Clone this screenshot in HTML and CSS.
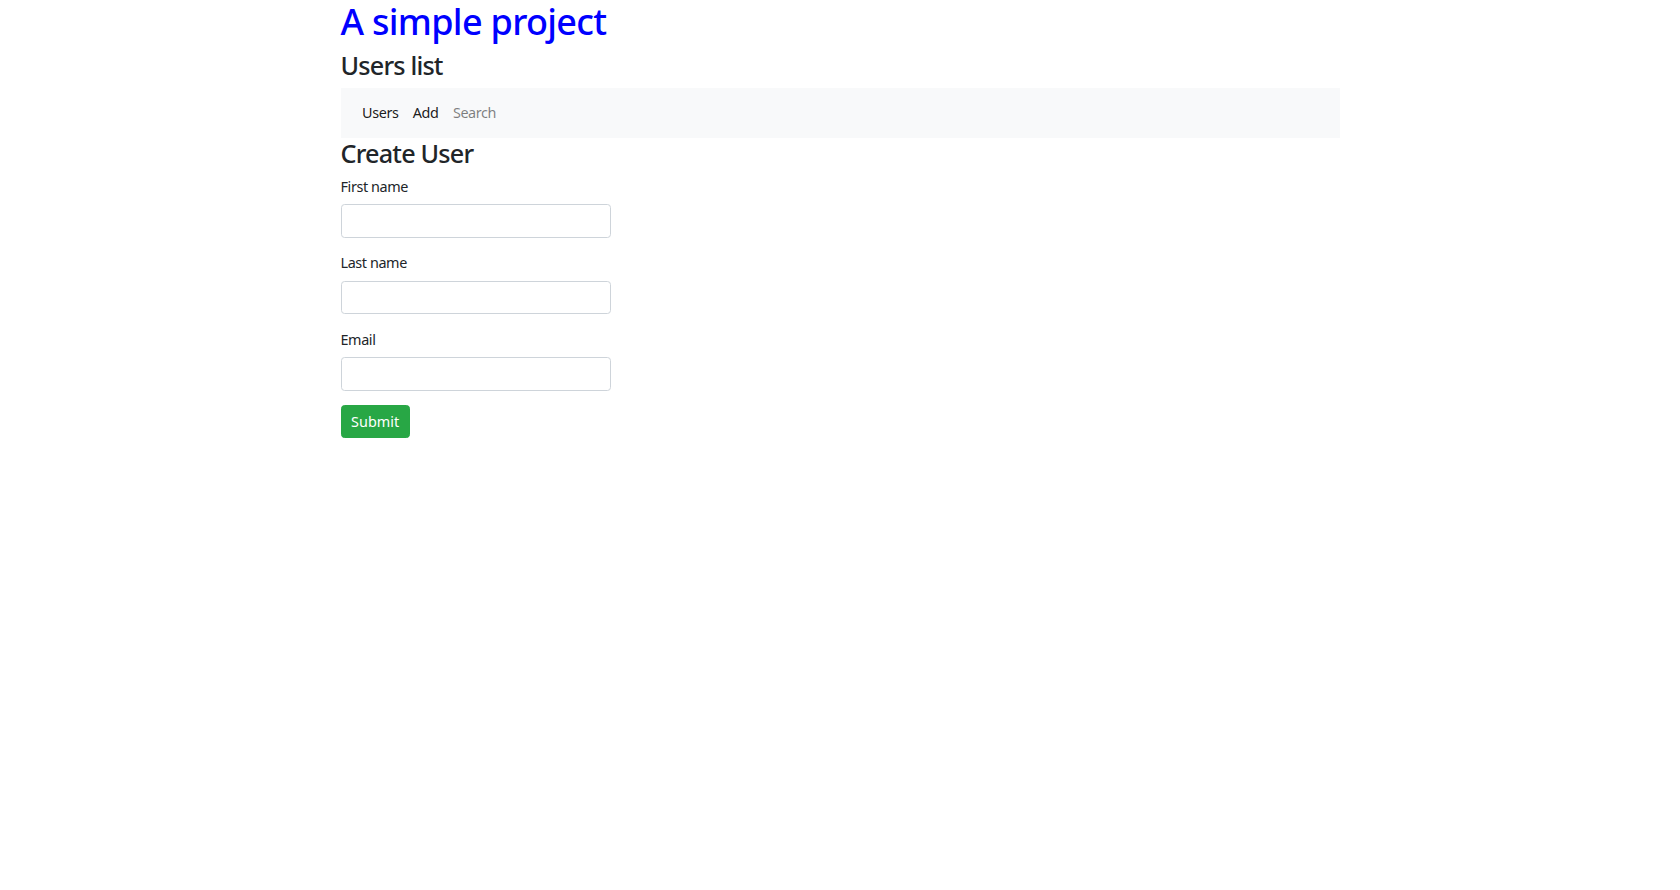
FILE: index.html
```html
<!DOCTYPE html>
<html lang="en">
<head>
<meta charset="utf-8">
<title>A simple project</title>
<link rel="stylesheet" href="styles.css">
</head>
<body>
<div class="container">
  <h1 class="title">A simple project</h1>
  <h3 class="subtitle">Users list</h3>
  <nav class="navbar">
    <ul class="nav">
      <li><a class="nav-link active" href="#">Users</a></li>
      <li><a class="nav-link active" href="#">Add</a></li>
      <li><a class="nav-link" href="#">Search</a></li>
    </ul>
  </nav>
  <h3 class="subtitle">Create User</h3>
  <form class="form">
    <div class="form-group">
      <label for="first">First name</label>
      <input id="first" class="form-control" type="text">
    </div>
    <div class="form-group">
      <label for="last">Last name</label>
      <input id="last" class="form-control" type="text">
    </div>
    <div class="form-group">
      <label for="email">Email</label>
      <input id="email" class="form-control" type="email">
    </div>
    <button type="submit" class="btn-success">Submit</button>
  </form>
</div>
</body>
</html>
```
FILE: styles.css
```css
* { box-sizing: border-box; }
html, body {
  margin: 0;
  background: #fff;
}
body {
  font-family: "Noto Sans", "Open Sans", sans-serif;
  font-size: 14.4px;
  line-height: 1.5;
  letter-spacing: -0.4px;
  color: #212529;
}
.container {
  width: 999px;
  margin: 0 auto;
}
.title {
  margin: 0 0 7.2px;
  font-size: 36px;
  font-weight: 500;
  line-height: 1.2;
  letter-spacing: -0.7px;
  color: #0000ff;
}
.subtitle {
  margin: 0 0 7.2px;
  font-size: 25.2px;
  font-weight: 500;
  line-height: 1.2;
  letter-spacing: -0.8px;
}
.navbar {
  background: #f8f9fa;
  padding: 7.2px 14.4px;
}
.nav {
  display: flex;
  margin: 0;
  padding: 0;
  list-style: none;
}
.nav-link {
  display: block;
  padding: 7.2px 7.2px;
  color: rgba(0, 0, 0, 0.5);
  text-decoration: none;
}
.nav-link.active {
  color: rgba(0, 0, 0, 0.9);
}
.form-group {
  margin-bottom: 14.4px;
}
.form-group label {
  display: block;
  margin-bottom: 7px;
}
.form-control {
  display: block;
  width: 270px;
  height: 33.6px;
  padding: 5.4px 10.8px;
  font: inherit;
  color: #495057;
  background: #fff;
  border: 1px solid #ced4da;
  border-radius: 3.6px;
}
.btn-success {
  display: block;
  height: 32.4px;
  margin-top: 1.6px;
  padding: 0 9.6px;
  font: inherit;
  color: #fff;
  background: #28a745;
  border: 1px solid #28a745;
  border-radius: 3.6px;
  cursor: pointer;
}
```
